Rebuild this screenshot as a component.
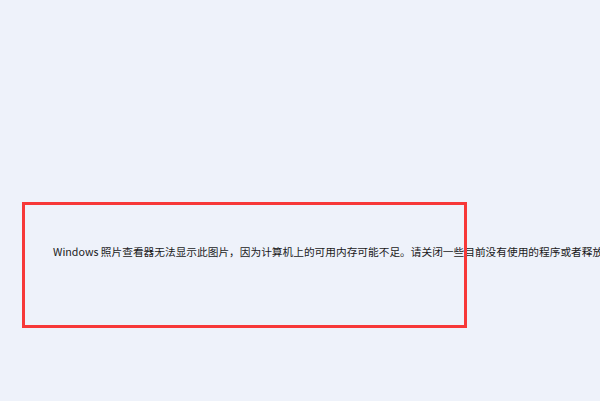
export default function App() {
  return (
    <div className="relative h-[401px] w-[600px] overflow-hidden bg-[#eef2fa]">
      {/* error message line */}
      <div className="pt-[244px] pl-[53px]">
        <p className="whitespace-nowrap text-[10.7px] leading-[16px] text-[#1a1a1a] [font-family:'Noto_Sans_CJK_SC','Noto_Sans',sans-serif]">
          Windows 照片查看器无法显示此图片，因为计算机上的可用内存可能不足。请关闭一些目前没有使用的程序或者释放部分硬盘空间（如果硬盘几乎已满），然后重试。
        </p>
      </div>

      {/* red annotation box drawn over the text */}
      <div className="absolute left-[22px] top-[202px] h-[126px] w-[445px] border-[3px] border-[#f73838]" />
    </div>
  )
}
